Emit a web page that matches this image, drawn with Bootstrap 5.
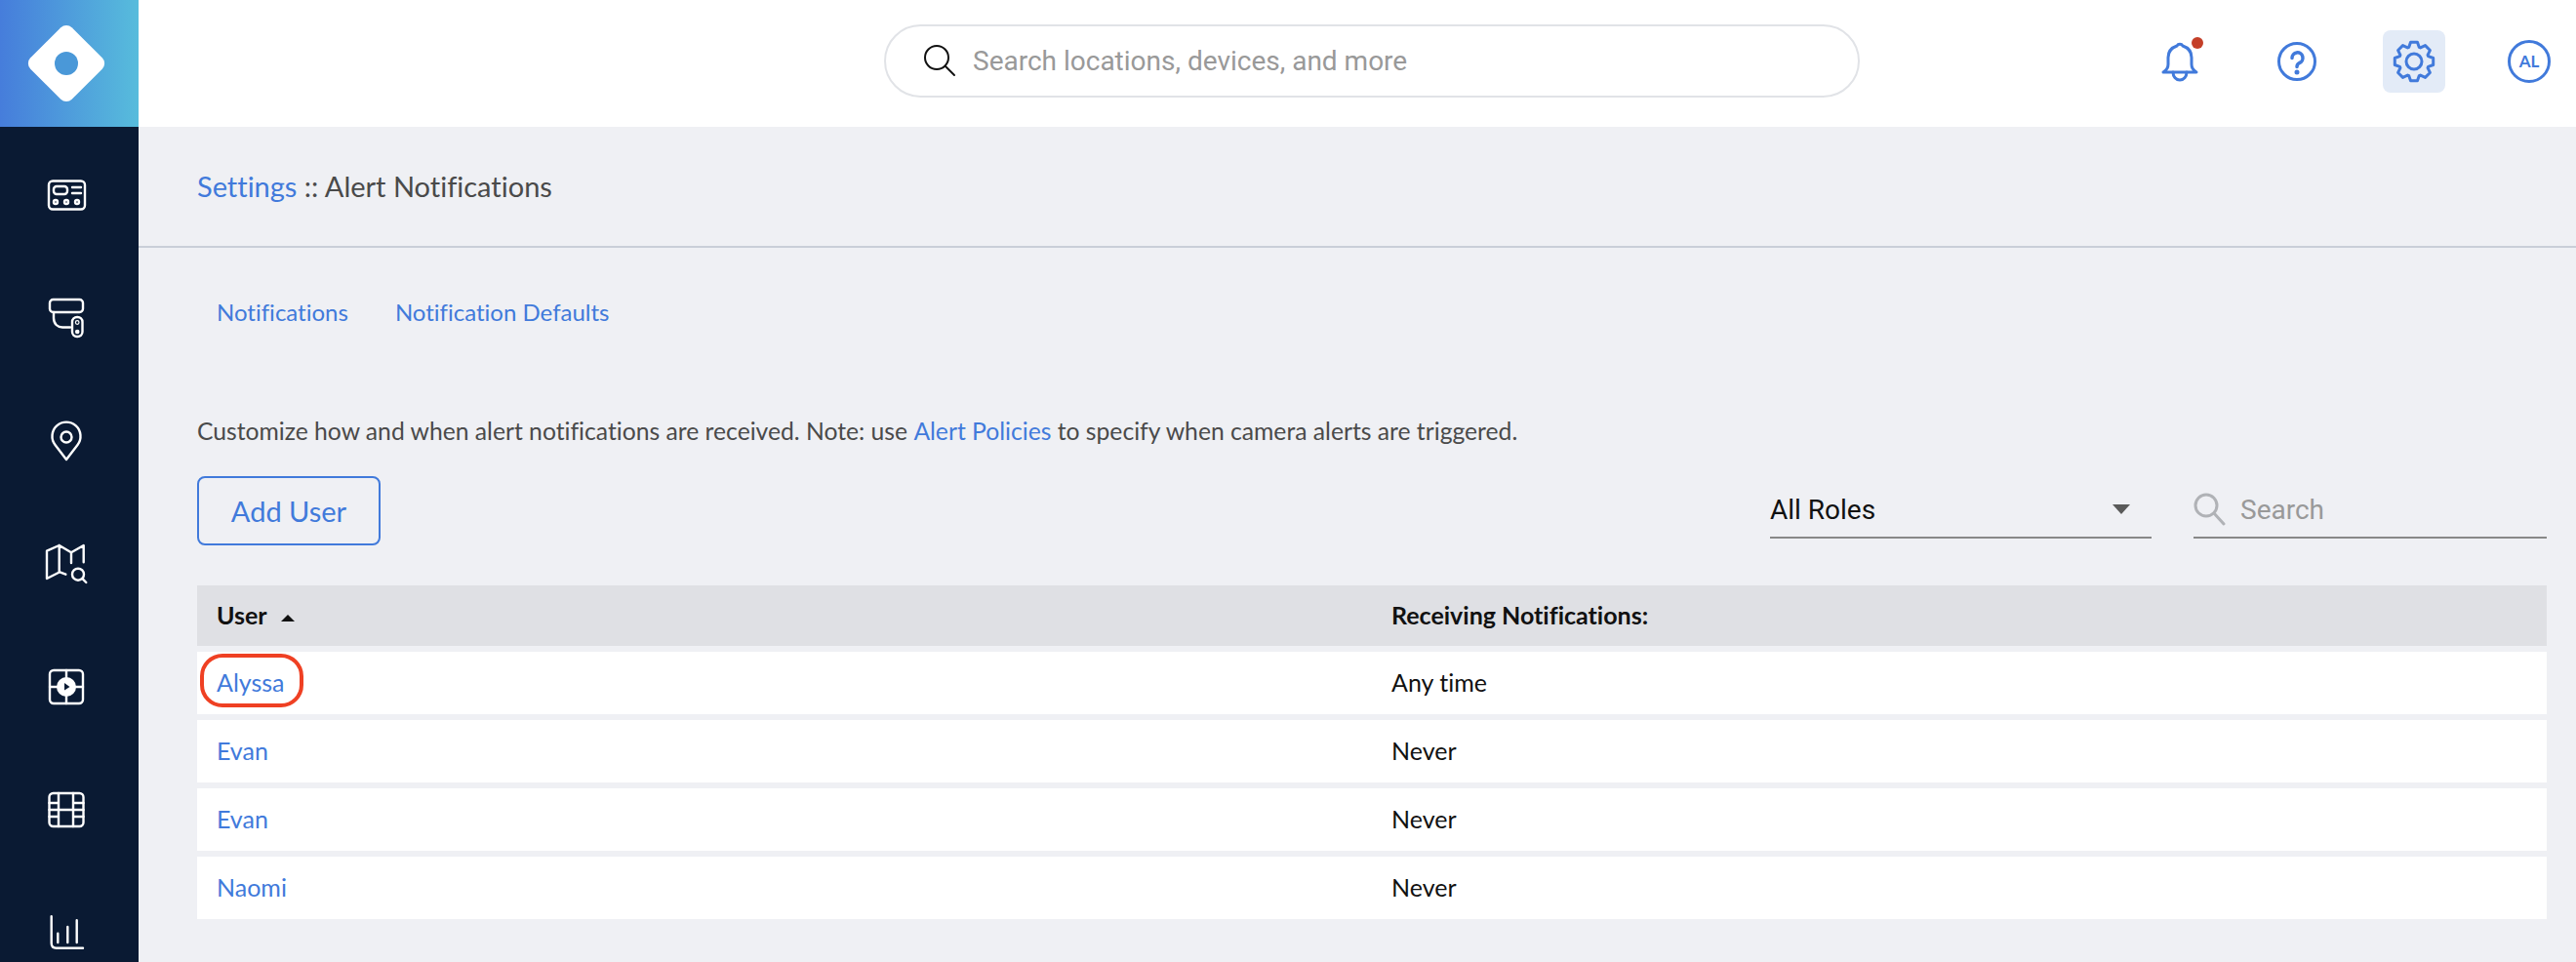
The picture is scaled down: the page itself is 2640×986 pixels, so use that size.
<!DOCTYPE html>
<html lang="en">
<head>
<meta charset="utf-8">
<title>Alert Notifications</title>
<link href="https://cdn.jsdelivr.net/npm/bootstrap@5.3.0/dist/css/bootstrap.min.css" rel="stylesheet">
<style>
html,body{height:986px;overflow:hidden}
body{font-family:"Lato","Noto Sans",sans-serif;font-variant-ligatures:none;background:#eff0f4;color:#4a4a4a}
a{text-decoration:none;color:#417adb}
.shell{height:986px}
.side{width:142px;flex:none;background:#0a1a33;overflow:hidden}
.logo-box{height:130px;flex:none;padding-right:6px;background:linear-gradient(90deg,#467ddb,#57bcdc)}
.side-items{padding-top:7px;flex:none}
.side-item{height:126px;flex:none;padding-right:6px}
.side-item svg{width:48px;height:48px;fill:none;stroke:#fff;stroke-width:2.4;stroke-linecap:round;stroke-linejoin:round}
.topbar{height:130px;flex:none;padding-bottom:5px;background:#fff}
.pill{width:1000px;height:75px;margin-left:764px;border:2px solid #e1e3e7;border-radius:38px;padding-left:37px}
.pill svg{width:36px;height:36px;flex:none;fill:none;stroke:#111;stroke-width:2;stroke-linecap:round}
.pill .form-control{border:0;background:transparent;box-shadow:none;padding:0 0 0 16px;font:28px "Roboto",sans-serif;color:#333}
.pill .form-control::placeholder{color:#999}
.tools{gap:56px;padding-right:18px}
.tool{width:64px;height:64px;border-radius:8px}
.tool svg{width:64px;height:64px;fill:none;stroke:#417adb;stroke-width:3;stroke-linecap:round;stroke-linejoin:round}
.tool-on{background:#e3ebf7}
.red-dot{position:absolute;top:7px;left:44px;width:12px;height:12px;border-radius:50%;background:#c43f28}
.avatar{width:60px}
.avatar span{width:44px;height:44px;border:3px solid #417adb;border-radius:50%;color:#417adb;font-size:17px;font-weight:700}
.crumbs{height:124px;flex:none;padding-left:60px;border-bottom:2px solid #c9ced8;font-size:29px}
.tabs{height:132px;flex:none;padding-left:60px}
.tabs .nav-link{padding:0 20px;margin-right:8px;font-size:24px;color:#417adb}
.content{padding:0 30px 0 60px}
.note{font-size:24.7px;height:102px;padding-top:10px}
.add-btn{width:188px;height:71px;padding:0;font-size:29px;color:#417adb;border:2px solid #417adb;border-radius:8px;background:transparent}
.tool-row{height:71px;margin-bottom:41px}
.role-box{width:391px;height:56px;margin-top:8px;margin-right:43px;padding-bottom:2px;border-bottom:2.5px solid #888;font:28px "Roboto",sans-serif;color:#111}
.caret-down{width:0;height:0;margin-right:22px;border-left:9px solid transparent;border-right:9px solid transparent;border-top:10px solid #5a5a5a}
.find-box{width:362px;height:56px;margin-top:8px;padding-bottom:2px;border-bottom:2.5px solid #888;font:28px "Roboto",sans-serif;color:#999}
.find-box svg{width:34px;height:34px;fill:none;stroke:#b0b2b6;stroke-width:3;stroke-linecap:round;margin-right:14px}
.tbl-head{height:62px;background:#dfe0e4;margin-bottom:6px;font-size:25px;font-weight:700;color:#111}
.tbl-row{height:64px;background:#fff;margin-bottom:6px;font-size:25px;color:#111}
.cell{padding-left:20px}
.sort-up{display:inline-block;width:0;height:0;margin-left:14px;vertical-align:3px;border-left:7.5px solid transparent;border-right:7.5px solid transparent;border-bottom:7.5px solid #111}
.circled{position:absolute;left:3px;top:2px;width:106px;height:55px;border:4px solid #ef4023;border-radius:23px;pointer-events:none}
</style>
</head>
<body>
<div class="shell d-flex">
  <aside class="side d-flex flex-column">
    <div class="logo-box d-flex align-items-center justify-content-center">
      <svg width="84" height="84" viewBox="-42 -42 84 84"><rect x="-30" y="-30" width="60" height="60" rx="8" fill="#fff" transform="rotate(45)"/><circle r="12" fill="#4a98d8"/></svg>
    </div>
    <nav class="side-items d-flex flex-column">
      <a class="side-item d-flex align-items-center justify-content-center" href="#"><svg viewBox="0 0 48 48"><rect x="6" y="9.5" width="37" height="29" rx="4"/><rect x="11" y="15" width="14" height="8" rx="3"/><path d="M30 16h9M30 22h9"/><circle cx="13" cy="31" r="2"/><circle cx="24" cy="31" r="2"/><circle cx="35" cy="31" r="2"/></svg></a>
      <a class="side-item d-flex align-items-center justify-content-center" href="#"><svg viewBox="0 0 48 48"><rect x="7" y="5" width="34" height="13" rx="3.5"/><path d="M11 18v6c0 6 4 9.500 9 9.500h8"/><rect x="30" y="23" width="10.500" height="20" rx="5"/><circle cx="35.200" cy="28.500" r="1.800" stroke-width="1.200"/><circle cx="35.200" cy="38" r="2.300" fill="#fff" stroke="none"/></svg></a>
      <a class="side-item d-flex align-items-center justify-content-center" href="#"><svg viewBox="0 0 48 48"><path d="M24 43 12.500 28A14.500 14.500 0 1 1 35.500 28Z"/><circle cx="24" cy="20" r="5.500"/></svg></a>
      <a class="side-item d-flex align-items-center justify-content-center" href="#"><svg viewBox="0 0 48 48"><path d="M17.300 32.300 4 39V10.700L16.700 5 29 12.300 41.700 5V22.300M16.700 5V32M17.300 32.300 23.300 34.700M29 12.300V23"/><circle cx="36" cy="34.700" r="6"/><path d="M40.500 39.200 44.300 43"/></svg></a>
      <a class="side-item d-flex align-items-center justify-content-center" href="#"><svg viewBox="0 0 48 48"><rect x="7" y="7" width="34" height="34" rx="4"/><path d="M24 7V41M7 24H41"/><circle cx="24" cy="24" r="10" fill="#fff" stroke="none"/><path d="M22 20 27.500 24 22 27.500Z" fill="#0a1a33" stroke="none"/></svg></a>
      <a class="side-item d-flex align-items-center justify-content-center" href="#"><svg viewBox="0 0 48 48"><rect x="6.500" y="7" width="35" height="34" rx="4"/><path d="M16 7V41M31 7V41M6.500 17H16M6.500 24H41.500M6.500 31H16M31 17H41.500M31 31H41.500"/></svg></a>
      <a class="side-item d-flex align-items-center justify-content-center" href="#"><svg viewBox="0 0 48 48"><path d="M8.700 7.300V34.700C8.700 38 10.500 39.700 13.700 39.700H41M15.300 24.700V34M25.300 18V34M34.700 11.300V34"/></svg></a>
    </nav>
  </aside>
  <main class="flex-grow-1 d-flex flex-column">
    <header class="topbar d-flex align-items-center justify-content-between">
      <div class="pill d-flex align-items-center">
        <svg viewBox="0 0 36 36"><circle cx="15" cy="14" r="12"/><path d="M24 23 33 32"/></svg>
        <input class="form-control" type="text" placeholder="Search locations, devices, and more">
      </div>
      <div class="tools d-flex align-items-center">
        <a class="tool position-relative d-block" href="#"><svg viewBox="-32 -32 64 64"><path d="M-17 11Q-12 8-12 3V-4C-12-12-6-15-3-16A3.500 3.500 0 0 1 3-16C6-15 12-12 12-4V3Q12 8 17 11Z"/><path d="M-7 11A7 8 0 0 0 7 11"/></svg><span class="red-dot"></span></a>
        <a class="tool d-block" href="#"><svg viewBox="-32 -32 64 64"><circle r="18.500"/><path d="M-5-3.500A5.500 5.500 0 1 1 2.500 1.500C.5 2.500 0 3.500 0 5.500" stroke-width="3.500"/><circle cy="11" r="1.500" fill="#417adb" stroke-width="2"/></svg></a>
        <a class="tool tool-on d-block" href="#"><svg viewBox="-32 -32 64 64"><path d="M-5.300-14.570-3.470-19.700H3.470L5.300-14.570 6.550-14.050 11.480-16.380 16.380-11.480 14.050-6.550 14.570-5.300 19.700-3.470V3.470L14.570 5.300 14.050 6.550 16.380 11.480 11.480 16.380 6.550 14.050 5.300 14.570 3.470 19.700H-3.470L-5.300 14.570-6.550 14.050-11.480 16.380-16.380 11.480-14.050 6.550-14.570 5.300-19.700 3.470V-3.470L-14.570-5.300-14.050-6.550-16.380-11.480-11.480-16.380-6.550-14.050Z"/><circle r="8"/></svg></a>
        <a class="avatar d-flex justify-content-center" href="#"><span class="d-flex align-items-center justify-content-center">AL</span></a>
      </div>
    </header>
    <div class="crumbs d-flex align-items-center"><span><a href="#">Settings</a> :: Alert Notifications</span></div>
    <ul class="tabs nav align-items-center">
      <li class="nav-item"><a class="nav-link" href="#">Notifications</a></li>
      <li class="nav-item"><a class="nav-link" href="#">Notification Defaults</a></li>
    </ul>
    <section class="content">
      <p class="note d-flex align-items-center m-0">Customize how and when alert notifications are received. Note: use&nbsp;<a href="#">Alert Policies</a>&nbsp;to specify when camera alerts are triggered.</p>
      <div class="tool-row d-flex justify-content-between">
        <button class="add-btn btn" type="button">Add User</button>
        <div class="d-flex">
          <div class="role-box d-flex align-items-center justify-content-between"><span>All Roles</span><span class="caret-down"></span></div>
          <div class="find-box d-flex align-items-center"><svg viewBox="0 0 34 34"><circle cx="13" cy="13" r="11"/><path d="M21 21 31 32"/></svg><span>Search</span></div>
        </div>
      </div>
      <div class="tbl-head row g-0 align-items-center"><div class="col-6 cell">User<span class="sort-up"></span></div><div class="col-6 cell">Receiving Notifications:</div></div>
      <div class="tbl-row row g-0 align-items-center position-relative"><div class="col-6 cell"><a href="#">Alyssa</a></div><div class="col-6 cell">Any time</div><span class="circled"></span></div>
      <div class="tbl-row row g-0 align-items-center"><div class="col-6 cell"><a href="#">Evan</a></div><div class="col-6 cell">Never</div></div>
      <div class="tbl-row row g-0 align-items-center"><div class="col-6 cell"><a href="#">Evan</a></div><div class="col-6 cell">Never</div></div>
      <div class="tbl-row row g-0 align-items-center"><div class="col-6 cell"><a href="#">Naomi</a></div><div class="col-6 cell">Never</div></div>
    </section>
  </main>
</div>
<script src="https://cdn.jsdelivr.net/npm/bootstrap@5.3.0/dist/js/bootstrap.bundle.min.js"></script>
</body>
</html>
